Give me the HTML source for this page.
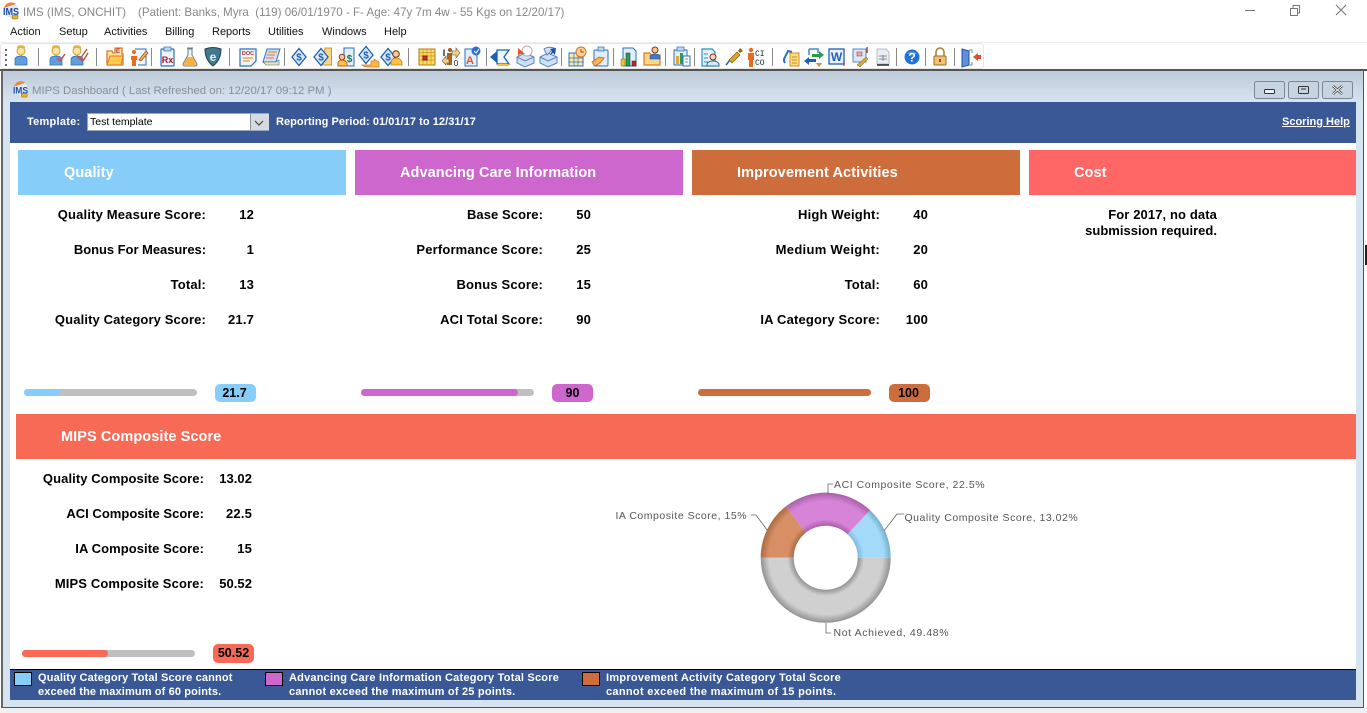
<!DOCTYPE html>
<html><head><meta charset="utf-8"><title>MIPS Dashboard</title>
<style>
html,body{margin:0;padding:0;background:#fff;width:1367px;height:713px;overflow:hidden}
body{position:relative;font-family:"Liberation Sans",sans-serif}
.a{position:absolute;white-space:nowrap}
.box{position:absolute}
.t{position:absolute;white-space:nowrap;font-size:11.6px;color:#888;top:5px;line-height:15px}
.m{position:absolute;white-space:nowrap;font-size:11px;color:#111;top:25px;line-height:14px}
.h{position:absolute;height:45px;line-height:46px;color:#fff;font-weight:bold;font-size:14.5px;letter-spacing:.08px;white-space:nowrap;box-sizing:border-box}
.l,.v{position:absolute;white-space:nowrap;font-weight:bold;font-size:13px;letter-spacing:.17px;color:#000;line-height:16px;text-align:right;margin-top:1px}
.bar{position:absolute;height:7px;background:#bfbfbf;border-radius:4px;width:173px}
.bar i{display:block;height:7px;border-radius:4px}
.bd{position:absolute;width:41px;height:18px;border-radius:5px;text-align:center;font-weight:bold;font-size:12.5px;line-height:18px;color:#000}
.lg{position:absolute;white-space:nowrap;font-weight:bold;font-size:11px;letter-spacing:.21px;color:#fff;line-height:14px;margin-top:1px}
.sw{position:absolute;top:672px;width:16px;height:12px;border:1px solid #000}
.sep{stroke:#8a8a8a;stroke-width:1}
text{font-family:"Liberation Sans",sans-serif}
</style></head><body>

<!-- App icon -->
<svg class="box" style="left:2px;top:2px" width="18" height="18" viewBox="0 0 18 18"><circle cx="9" cy="8" r="7.500" fill="#dfe9f6"/><path d="M2 6a7.500 7.500 0 0 1 12-4z" fill="#e8863a"/><text x="9" y="13" font-size="10" font-weight="bold" fill="#1e4fa8" text-anchor="middle" textLength="16" lengthAdjust="spacingAndGlyphs">IMS</text><rect x="10" y="13" width="6" height="4" rx="1" fill="#e9b21f" stroke="#8a5a10" stroke-width=".5"/></svg>
<span class="t" style="left:23px">IMS (IMS, ONCHIT)</span>
<span class="t" style="left:138px">(Patient: Banks, Myra&nbsp; (119) 06/01/1970 - F- Age: 47y 7m 4w - 55 Kgs on 12/20/17)</span>

<!-- window buttons -->
<svg class="box" style="left:1240px;top:0" width="120" height="20" fill="none" stroke="#777"><path d="M5 10.500h10"/><path d="M50.500 8.500h7v7h-7zM53 8V5.500h6.500V13H58"/><path d="M96 5l10 10M106 5l-10 10"/></svg>

<!-- menu -->
<span class="m" style="left:10px">Action</span>
<span class="m" style="left:59px">Setup</span>
<span class="m" style="left:104px">Activities</span>
<span class="m" style="left:165px">Billing</span>
<span class="m" style="left:212px">Reports</span>
<span class="m" style="left:268px">Utilities</span>
<span class="m" style="left:322px">Windows</span>
<span class="m" style="left:384px">Help</span>
<div class="box" style="left:0;top:42px;width:1367px;height:1px;background:#eee"></div>

<!-- toolbar -->
<svg class="box" style="left:0;top:43px" width="990" height="27" viewBox="0 0 990 27">
<defs>
<g id="p"><circle cx="0" cy="-5" r="4" fill="#fbe3a6" stroke="#c9a23a"/><path d="M-4-7.500q4-4 8 0l0-2q-4-3-8 0z" fill="#e3b53c"/><path d="M-6 9v-6q1-3 6-3t6 3v6z" fill="#5f9fe0" stroke="#2c66b5" stroke-width=".7"/></g>
<g id="d"><path d="M0-8.500l7 8.500-7 8.500-7-8.500z" fill="#dce9fa" stroke="#1b5fb5" stroke-width="1.300"/><text x="0" y="3.500" font-size="10" font-weight="bold" fill="#1b5fb5" text-anchor="middle">$</text></g>
</defs>
<rect x=".5" y=".5" width="983" height="25" rx="3" fill="#fff" stroke="#e6e6e6"/>
<g fill="#666"><rect x="5" y="6" width="2" height="2"/><rect x="5" y="11" width="2" height="2"/><rect x="5" y="16" width="2" height="2"/><rect x="5" y="21" width="2" height="2"/></g>
<path class="sep" d="M38.500 5v18M96.500 5v18M151.500 5v18M229.500 5v18M284.500 5v18M408.500 5v18M486.500 5v18M561.500 5v18M613.500 5v18M665.500 5v18M694.500 5v18M772.500 5v18M896.500 5v18M925.500 5v18M954.500 5v18"/>

<use href="#p" x="21" y="13"/>
<use href="#p" x="56" y="13"/><path d="M57 15l3 3 5-7" fill="none" stroke="#c8512f" stroke-width="1.500"/>
<use href="#p" x="77" y="13"/><path d="M77 13l3 3 7-10M80 16l3 2 5-8" fill="none" stroke="#c8512f" stroke-width="1.400"/>

<!-- folder -->
<path d="M107 22V8h5l1 2h2V5h7v6h1v11z" fill="#fde6a0" stroke="#e0782a" stroke-width="1.300"/><path d="M107 22l3-9h13l-2 9z" fill="#ffc94d" stroke="#e0782a"/><text x="118" y="10" font-size="6" font-weight="bold" fill="#b33" text-anchor="middle">E</text>
<!-- person pencil -->
<path d="M135 6h11v16h-8" fill="#eef5fd" stroke="#2a6fc0"/><circle cx="134" cy="9" r="2" fill="#ea6a1e"/><path d="M131 13h6v4h-1v6h-4v-6h-1z" fill="#ea6a1e"/><path d="M139 17l7-9 2 2-7 8z" fill="#f0c030" stroke="#a33" stroke-width=".7"/>
<!-- Rx -->
<rect x="161" y="6" width="13" height="17" rx="1" fill="#eef5fd" stroke="#2a6fc0" stroke-width="1.200"/><rect x="164" y="4" width="7" height="4" fill="#bcd3ee" stroke="#2a6fc0" stroke-width=".7"/><text x="167.500" y="20" font-size="9" font-weight="bold" fill="#a0182c" text-anchor="middle">Rx</text>
<!-- flask -->
<path d="M187 5h6M188 6v6l-5 9q0 2 2 2h10q2 0 2-2l-5-9V6z" fill="#eef5f5" stroke="#6b7f8a"/><path d="M185 18l3-4h4l3 4 1 4h-12z" fill="#f6b23a"/>
<!-- shield -->
<path d="M205 6q8-3 16 0 0 11-8 17-8-6-8-17z" fill="#3e7a8c" stroke="#263f4b"/><text x="213" y="18" font-size="12" font-weight="bold" fill="#e2f2f5" text-anchor="middle">e</text>

<!-- doc -->
<path d="M240 6h16v12l-5 5h-11z" fill="#eef5fd" stroke="#2a6fc0" stroke-width="1.200"/><text x="248" y="12" font-size="5.500" font-weight="bold" fill="#b5301c" text-anchor="middle">DOC</text><path d="M243 15h10M243 18h7" stroke="#e89b3a" stroke-width="1.300"/>
<!-- note -->
<path d="M267 6h13l-4 13h-13z" fill="#cfe0f5" stroke="#2a6fc0"/><path d="M268 9h9M267 12h8M266 15h8" stroke="#e8743a"/><path d="M263 19h13l3-2v5h-13z" fill="#f3e2a8" stroke="#2a6fc0" stroke-width=".6"/>

<use href="#d" x="299" y="14"/>
<path d="M325 5h6.500v17h-9z" fill="#fbd588" stroke="#d9952c"/><use href="#d" x="321" y="14"/>
<path d="M344 5h10v18h-10z" fill="#e3eefb" stroke="#2a6fc0"/><text x="349.500" y="19" font-size="10" font-weight="bold" fill="#11803a" text-anchor="middle">$</text><circle cx="342" cy="14" r="2.800" fill="#f6c99a" stroke="#8a3c14"/><path d="M338 23v-3q1-3 4-3t5 3v3z" fill="#f9c04a" stroke="#c35f14"/>
<use href="#d" x="366" y="12"/><path d="M362 22h9l0-4h3v-2l5 3v5h-11q-4 0-6-2z" fill="#f9b845" stroke="#c97a1c" stroke-width=".7"/>
<use href="#d" x="388" y="14"/><circle cx="396" cy="11" r="3.300" fill="#f6c99a" stroke="#6a3014"/><path d="M391 22v-3q1-4 5-4t6 4v3z" fill="#f9c04a" stroke="#c97a1c" stroke-width=".8"/>

<!-- calendar grid -->
<rect x="419" y="6" width="16" height="16" fill="#f9dc5c" stroke="#b5771c"/><path d="M419 9.500h16M419 13h16M419 17h16M423 6v16M427 6v16M431 6v16" stroke="#c8932c" stroke-width=".7"/><rect x="423" y="13" width="4" height="4" fill="#c33" stroke="#811"/>
<!-- person arrows -->
<text x="444" y="13" font-size="9" font-weight="bold" fill="#223" text-anchor="middle">I</text><circle cx="450" cy="7" r="2" fill="#a9591e"/><path d="M447 10h5v12h-5z" fill="#b3611f"/><path d="M452 8h4V5l4 5-4 5v-3h-4z" fill="#f8d27a" stroke="#555" stroke-width=".6"/><path d="M449 16h-3v-3l-4 5 4 4v-2h3z" fill="#f8d27a" stroke="#555" stroke-width=".6"/><text x="456" y="23" font-size="8" fill="#223" text-anchor="middle">0</text>
<!-- doc A check -->
<path d="M465 6h12v17h-12z" fill="#e3eefb" stroke="#2a6fc0"/><text x="470" y="21" font-size="11" font-weight="bold" fill="#d8551f" text-anchor="middle">A</text><circle cx="476" cy="8" r="4.500" fill="#2d6fd2"/><path d="M474 8l2 2 3-4" stroke="#fff" fill="none"/>
<!-- envelope arrow -->
<path d="M497 7h12l-5 7 5 7h-12z" fill="#eef5fd" stroke="#1c5fb8" stroke-width="1.300"/><path d="M490 14l7-6v12z" fill="#1c5fb8"/><path d="M497 21h12v2h-12z" fill="#f0c040"/>
<!-- stacks -->
<path d="M517 14l8-4 9 4v6l-9 4-8-4z" fill="#cfe0f5" stroke="#5a86bd"/><path d="M517 14l8 4 9-4" fill="none" stroke="#5a86bd"/><circle cx="527" cy="8" r="5" fill="#fff" stroke="#c9a3a3"/><path d="M518 5l7 6h-5l-2 2z" fill="#e4552c"/>
<path d="M540 14l8-4 9 4v6l-9 4-8-4z" fill="#cfe0f5" stroke="#5a86bd"/><path d="M540 14l8 4 9-4" fill="none" stroke="#5a86bd"/><path d="M544 6q4-3 10-1l-7 7z" fill="#cfe0f5" stroke="#5a86bd"/><path d="M556 5l-1 7-2-2-3 2 2-4-2-2z" fill="#1c4fb0"/>

<!-- calendar clock -->
<rect x="569" y="10" width="14" height="13" fill="#fbe9a6" stroke="#2a6fc0"/><path d="M569 15h14M569 19h14M574 10v13M578 10v13" stroke="#2a6fc0" stroke-width=".7"/><circle cx="581" cy="9" r="5" fill="#fbd588" stroke="#d96c2c"/><path d="M581 6v3h3" stroke="#c33" fill="none"/>
<!-- clipboard hand -->
<rect x="594" y="7" width="14" height="16" rx="1" fill="#e3eefb" stroke="#2a6fc0"/><rect x="598" y="4" width="6" height="4" fill="#bcd3ee" stroke="#2a6fc0" stroke-width=".7"/><path d="M592 19l7-5 5 1-4 5-5 3z" fill="#f5b65a" stroke="#d96c2c"/>

<!-- chart -->
<path d="M623 5h10l3 3v15h-13z" fill="#e3eefb" stroke="#2a6fc0"/><rect x="621" y="16" width="4" height="7" fill="#f0c030" stroke="#8a6a10" stroke-width=".5"/><rect x="626" y="10" width="4" height="13" fill="#2aa050" stroke="#126" stroke-width=".5"/><rect x="632" y="18" width="4" height="5" fill="#c3271f" stroke="#611" stroke-width=".5"/>
<!-- folder person -->
<path d="M644 22V10h6l1 2h9v10z" fill="#fbd588" stroke="#e0782a" stroke-width="1.200"/><circle cx="655" cy="7" r="3" fill="#f6c99a" stroke="#8a2c14"/><path d="M650 16v-3q1-2 5-2t5 2v3z" fill="#3d7dc8" stroke="#1f4f90" stroke-width=".6"/>
<!-- clipboard chart -->
<rect x="674" y="7" width="13" height="15" fill="#e3eefb" stroke="#2a6fc0"/><rect x="677" y="4" width="7" height="4" fill="#bcd3ee" stroke="#2a6fc0" stroke-width=".7"/><rect x="676" y="13" width="3" height="8" fill="#e8a030"/><rect x="680" y="10" width="3" height="11" fill="#2aa050"/><path d="M683 13h7v10h-7z" fill="#fff" stroke="#2a6fc0"/><path d="M685 16h3M685 19h3" stroke="#2a6fc0" stroke-width=".7"/>

<!-- doc person -->
<path d="M702 6h10l3 3v14h-13z" fill="#e3f0fb" stroke="#2a8fc8" stroke-width="1.200"/><path d="M704 11h4M704 15h4M704 19h4" stroke="#2a8fc8"/><circle cx="713" cy="14" r="3" fill="#f6d9b6" stroke="#8a3014"/><path d="M707 23v-2q1-3 6-3t6 3v2z" fill="#d7eaf7" stroke="#2a6f98"/>
<!-- syringe -->
<path d="M726 22l4-5" stroke="#2a5fa8" stroke-width="1.500"/><path d="M729 17l8-8 3 3-8 8z" fill="#e0a428" stroke="#7a5a10" stroke-width=".7"/><path d="M738 8l2-3 3 3-3 2z" fill="#8a6a1a"/>
<!-- CI CO -->
<circle cx="751" cy="7" r="2.200" fill="#ea6a1e"/><path d="M748 10h6v7h-1v7h-4v-7h-1z" fill="#ea6a1e"/><text x="755" y="13" style="font-family:'Liberation Mono',monospace" font-size="8" fill="#123">CI</text><text x="755" y="22" style="font-family:'Liberation Mono',monospace" font-size="8" fill="#123">CO</text>

<!-- arrow note -->
<path d="M785 20q-2-3 0-6l3-6 4 1" fill="none" stroke="#2a6fc0" stroke-width="2"/><rect x="790" y="10" width="9" height="13" fill="#fbe07a" stroke="#d9852c"/><path d="M792 14h5M792 17h5M792 20h5" stroke="#a8741c" stroke-width=".7"/>
<!-- arrows -->
<path d="M809 6h9v4M809 6v6" fill="none" stroke="#2a6fc0" stroke-width="1.300"/><path d="M812 11h7V8l5 4-5 4v-2h-7z" fill="#2a9a48"/><path d="M816 19h-7v3l-5-4 5-4v2h7z" fill="#1f5fb8"/><path d="M816 20h6l-3 4z" fill="#e8832c"/>
<!-- W -->
<rect x="829" y="6" width="15" height="15" fill="#e8f0fb" stroke="#1f5fb8" stroke-width="1.300"/><text x="836.500" y="18" font-size="12" font-weight="bold" fill="#1f5fb8" text-anchor="middle">W</text><text x="843" y="23" font-size="7" font-weight="bold" fill="#a3201c">I</text>
<!-- paint -->
<rect x="853" y="6" width="13" height="13" fill="#dbe8f7" stroke="#5a86bd"/><rect x="857" y="9" width="5" height="4" fill="#e9a9a0" stroke="#a33" stroke-width=".5"/><path d="M857 22l9-8 2 2-8 8z" fill="#e0a428" stroke="#555" stroke-width=".5"/><text x="866" y="10" font-size="8" font-weight="bold" fill="#a3201c">I</text>
<!-- gray doc -->
<path d="M877 6h9l3 3v12h-12z" fill="#e9edf2" stroke="#b5bcc5"/><path d="M879 13h8M879 16h8M883 12v6" stroke="#6a7682" stroke-width=".8"/><path d="M877 22h12" stroke="#111" stroke-width="1.300"/>

<!-- help -->
<circle cx="912" cy="14" r="7.500" fill="#1f74d8"/><path d="M907 11a6 5 0 0 1 10 0" fill="#8cc0f0" opacity=".6"/><text x="912" y="18.500" font-size="12" font-weight="bold" fill="#fff" text-anchor="middle">?</text>
<!-- lock -->
<path d="M936 13V9a4 4 0 0 1 8 0v4" fill="none" stroke="#a87a2c" stroke-width="1.500"/><rect x="934" y="13" width="12" height="9" rx="1" fill="#f0c272" stroke="#9c6c1c"/><path d="M940 16v3" stroke="#513" stroke-width="1.300"/>
<!-- door -->
<path d="M962 6l7 2v14l-7 2z" fill="#5f8fd8" stroke="#1f4fa8"/><path d="M969 7h3v3M972 19v3h-3" fill="none" stroke="#6a8fbf"/><path d="M973 14l5-4v2h3v4h-3v2z" fill="#e84a2a"/>
</svg>

<!-- MDI window frame -->
<div class="box" style="left:0;top:69px;width:1367px;height:2px;background:#555"></div>
<div class="box" style="left:1px;top:71px;width:1363px;height:637px;background:#d6e4f1;border-left:2px solid #666;border-right:1px solid #555;border-bottom:1px solid #555;box-sizing:border-box"></div>
<div class="box" style="left:3px;top:71px;width:1360px;height:31px;background:linear-gradient(#bdcbd8,#d6e3f1)"></div>
<div class="box" style="left:0;top:708px;width:1367px;height:5px;background:#f0f0f0"></div>

<svg class="box" style="left:12px;top:81px" width="17" height="17" viewBox="0 0 18 18"><circle cx="9" cy="8" r="7.500" fill="#dfe9f6"/><path d="M2 6a7.500 7.500 0 0 1 12-4z" fill="#e8863a"/><text x="9" y="13" font-size="10" font-weight="bold" fill="#1e4fa8" text-anchor="middle" textLength="16" lengthAdjust="spacingAndGlyphs">IMS</text><rect x="10" y="13" width="6" height="4" rx="1" fill="#e9b21f" stroke="#8a5a10" stroke-width=".5"/></svg>
<span class="a" style="left:32px;top:84px;font-size:11.4px;line-height:15px;color:#8a8f96">MIPS Dashboard ( Last Refreshed on: 12/20/17 09:12 PM )</span>

<!-- MDI buttons -->
<svg class="box" style="left:1254px;top:81px" width="102" height="18" fill="none"><g fill="#c6d4e2" stroke="#7a8794"><rect x=".5" y=".5" width="30" height="17" rx="2"/><rect x="34.500" y=".5" width="30" height="17" rx="2"/><rect x="68.500" y=".5" width="30" height="17" rx="2"/></g><rect x="10.500" y="8.500" width="10" height="4" rx="1" fill="#eef" stroke="#333"/><rect x="44.500" y="5.500" width="10" height="7" rx="1" stroke="#333"/><path d="M47 8h5" stroke="#333"/><path d="M79 5l9 8M88 5l-9 8" stroke="#333" stroke-width="2.500"/><path d="M79 5l9 8M88 5l-9 8" stroke="#fff" stroke-width="1"/></svg>

<!-- blue header -->
<div class="box" style="left:10px;top:102px;width:1346px;height:41px;background:#3a5896"></div>
<span class="a" style="left:27px;top:115px;font-size:11px;font-weight:bold;letter-spacing:.25px;color:#fff;line-height:14px">Template:</span>
<div class="box" style="left:87px;top:113px;width:182px;height:18px;background:#fff;border:1px solid #9aa6b5;box-sizing:border-box"></div>
<span class="a" style="left:90px;top:115px;font-size:10.5px;color:#000;line-height:14px">Test template</span>
<div class="box" style="left:250px;top:114px;width:18px;height:16px;background:#d5dbe2;border-left:1px solid #8a95a2"></div>
<svg class="box" style="left:254px;top:120px" width="11" height="7" fill="none" stroke="#444" stroke-width="1.200"><path d="M1 1l4 4 4-4"/></svg>
<span class="a" style="left:276px;top:115px;font-size:11px;font-weight:bold;letter-spacing:.05px;color:#fff;line-height:14px">Reporting Period: 01/01/17 to 12/31/17</span>
<span class="a" style="left:1282px;top:115px;font-size:11px;font-weight:bold;color:#fff;line-height:14px;text-decoration:underline">Scoring Help</span>

<!-- white content -->
<div class="box" style="left:10px;top:143px;width:1346px;height:526px;background:#fff"></div>

<!-- category headers -->
<div class="h" style="left:18px;top:150px;width:328px;background:#87cdfa;padding-left:46px">Quality</div>
<div class="h" style="left:355px;top:150px;width:328px;background:#cd66cd;padding-left:45px">Advancing Care Information</div>
<div class="h" style="left:692px;top:150px;width:328px;background:#cd6d3c;padding-left:45px">Improvement Activities</div>
<div class="h" style="left:1029px;top:150px;width:327px;background:#ff6666;padding-left:45px">Cost</div>

<!-- Quality rows -->
<span class="l" style="right:1161px;top:206px">Quality Measure Score:</span><span class="v" style="right:1113px;top:206px">12</span>
<span class="l" style="right:1161px;top:241px;letter-spacing:-.04px">Bonus For Measures:</span><span class="v" style="right:1113px;top:241px">1</span>
<span class="l" style="right:1161px;top:276px">Total:</span><span class="v" style="right:1113px;top:276px">13</span>
<span class="l" style="right:1161px;top:311px;letter-spacing:.13px">Quality Category Score:</span><span class="v" style="right:1113px;top:311px">21.7</span>

<!-- ACI rows -->
<span class="l" style="right:824px;top:206px;letter-spacing:.08px">Base Score:</span><span class="v" style="right:776px;top:206px">50</span>
<span class="l" style="right:824px;top:241px">Performance Score:</span><span class="v" style="right:776px;top:241px">25</span>
<span class="l" style="right:824px;top:276px">Bonus Score:</span><span class="v" style="right:776px;top:276px">15</span>
<span class="l" style="right:824px;top:311px">ACI Total Score:</span><span class="v" style="right:776px;top:311px">90</span>

<!-- IA rows -->
<span class="l" style="right:487px;top:206px">High Weight:</span><span class="v" style="right:439px;top:206px">40</span>
<span class="l" style="right:487px;top:241px;letter-spacing:.3px">Medium Weight:</span><span class="v" style="right:439px;top:241px">20</span>
<span class="l" style="right:487px;top:276px">Total:</span><span class="v" style="right:439px;top:276px">60</span>
<span class="l" style="right:487px;top:311px">IA Category Score:</span><span class="v" style="right:439px;top:311px">100</span>

<!-- Cost -->
<span class="l" style="right:150px;top:206px;letter-spacing:.11px">For 2017, no data</span>
<span class="l" style="right:150px;top:222px;letter-spacing:.02px">submission required.</span>

<!-- bars -->
<div class="bar" style="left:24px;top:389px"><i style="width:36px;background:#87cdfa"></i></div>
<div class="bd" style="left:215px;top:384px;background:#87cdfa;width:39px;padding-right:2px">21.7</div>
<div class="bar" style="left:361px;top:389px"><i style="width:157px;background:#cd66cd"></i></div>
<div class="bd" style="left:552px;top:384px;background:#cd66cd">90</div>
<div class="bar" style="left:698px;top:389px"><i style="width:173px;background:#cd6d3c"></i></div>
<div class="bd" style="left:889px;top:384px;background:#cd6d3c;width:39px;padding-right:2px">100</div>

<!-- composite header -->
<div class="h" style="left:16px;top:414px;width:1340px;background:#f76a55;padding-left:45px">MIPS Composite Score</div>

<span class="l" style="right:1163px;top:470px;letter-spacing:.09px">Quality Composite Score:</span><span class="v" style="right:1115px;top:470px;letter-spacing:.05px">13.02</span>
<span class="l" style="right:1163px;top:505px;letter-spacing:.02px">ACI Composite Score:</span><span class="v" style="right:1115px;top:505px">22.5</span>
<span class="l" style="right:1163px;top:540px;letter-spacing:.07px">IA Composite Score:</span><span class="v" style="right:1115px;top:540px">15</span>
<span class="l" style="right:1163px;top:575px;letter-spacing:.12px">MIPS Composite Score:</span><span class="v" style="right:1115px;top:575px;letter-spacing:.05px">50.52</span>

<div class="bar" style="left:22px;top:650px"><i style="width:86px;background:#f76a55"></i></div>
<div class="bd" style="left:213px;top:644px;height:19px;line-height:19px;background:#f76a55">50.52</div>

<!-- donut -->
<svg class="box" style="left:600px;top:470px" width="490" height="175" viewBox="600 470 490 175">
<defs>
<radialGradient id="gq" gradientUnits="userSpaceOnUse" cx="825.700" cy="557.700" r="66"><stop offset=".48" stop-color="#7db8dc"/><stop offset=".58" stop-color="#a3dafa"/><stop offset=".88" stop-color="#a3dafa"/><stop offset="1" stop-color="#6fa8c8"/></radialGradient>
<radialGradient id="ga" gradientUnits="userSpaceOnUse" cx="825.700" cy="557.700" r="66"><stop offset=".48" stop-color="#a85ca8"/><stop offset=".58" stop-color="#d783d7"/><stop offset=".86" stop-color="#d783d7"/><stop offset="1" stop-color="#a45ca4"/></radialGradient>
<radialGradient id="gi" gradientUnits="userSpaceOnUse" cx="825.700" cy="557.700" r="66"><stop offset=".48" stop-color="#a86a45"/><stop offset=".58" stop-color="#d98f66"/><stop offset=".86" stop-color="#d98f66"/><stop offset="1" stop-color="#a3663f"/></radialGradient>
<radialGradient id="gg" gradientUnits="userSpaceOnUse" cx="825.700" cy="557.700" r="66"><stop offset=".48" stop-color="#8f8f8f"/><stop offset=".58" stop-color="#d0d0d0"/><stop offset=".86" stop-color="#d0d0d0"/><stop offset="1" stop-color="#8a8a8a"/></radialGradient>
</defs>
<path d="M890.700 557.700A65 65 0 0 0 870.060 510.140L847.540 534.300A32 32 0 0 1 857.700 557.700Z" fill="url(#gq)"/>
<path d="M870.060 510.140A65 65 0 0 0 785.690 506.480L806 532.480A32 32 0 0 1 847.540 534.300Z" fill="url(#ga)"/>
<path d="M785.690 506.480A65 65 0 0 0 760.700 557.700L793.700 557.700A32 32 0 0 1 806 532.480Z" fill="url(#gi)"/>
<path d="M760.700 557.700A65 65 0 0 0 890.700 557.700L857.700 557.700A32 32 0 0 1 793.700 557.700Z" fill="url(#gg)"/>
<g fill="none" stroke="#666" stroke-width=".8"><path d="M884 531l13-17h7"/><path d="M828 494v-10h5"/><path d="M767 530l-11-15h-5"/><path d="M826 623v10h5"/></g>
<g font-size="10.5" fill="#555" letter-spacing=".52"><text x="904.500" y="521">Quality Composite Score, 13.02%</text><text x="834" y="488" letter-spacing=".56">ACI Composite Score, 22.5%</text><text x="615.500" y="519">IA Composite Score, 15%</text><text x="833.500" y="636" letter-spacing=".62">Not Achieved, 49.48%</text></g>
</svg>

<!-- bottom legend -->
<div class="box" style="left:10px;top:669px;width:1346px;height:31px;background:#3a5896;border-top:1px solid #000;box-sizing:border-box"></div>
<div class="sw" style="left:14px;background:#87cdfa"></div>
<span class="lg" style="left:38px;top:670px;letter-spacing:.15px">Quality Category Total Score cannot</span>
<span class="lg" style="left:38px;top:684px;letter-spacing:.13px">exceed the maximum of 60 points.</span>
<div class="sw" style="left:265px;background:#cd66cd"></div>
<span class="lg" style="left:289px;top:670px">Advancing Care Information Category Total Score</span>
<span class="lg" style="left:289px;top:684px">cannot exceed the maximum of 25 points.</span>
<div class="sw" style="left:582px;background:#cd6d3c"></div>
<span class="lg" style="left:606px;top:670px;letter-spacing:.26px">Improvement Activity Category Total Score</span>
<span class="lg" style="left:606px;top:684px;letter-spacing:.31px">cannot exceed the maximum of 15 points.</span>

<div class="box" style="left:1365px;top:245px;width:2px;height:20px;background:#222"></div>
</body></html>
